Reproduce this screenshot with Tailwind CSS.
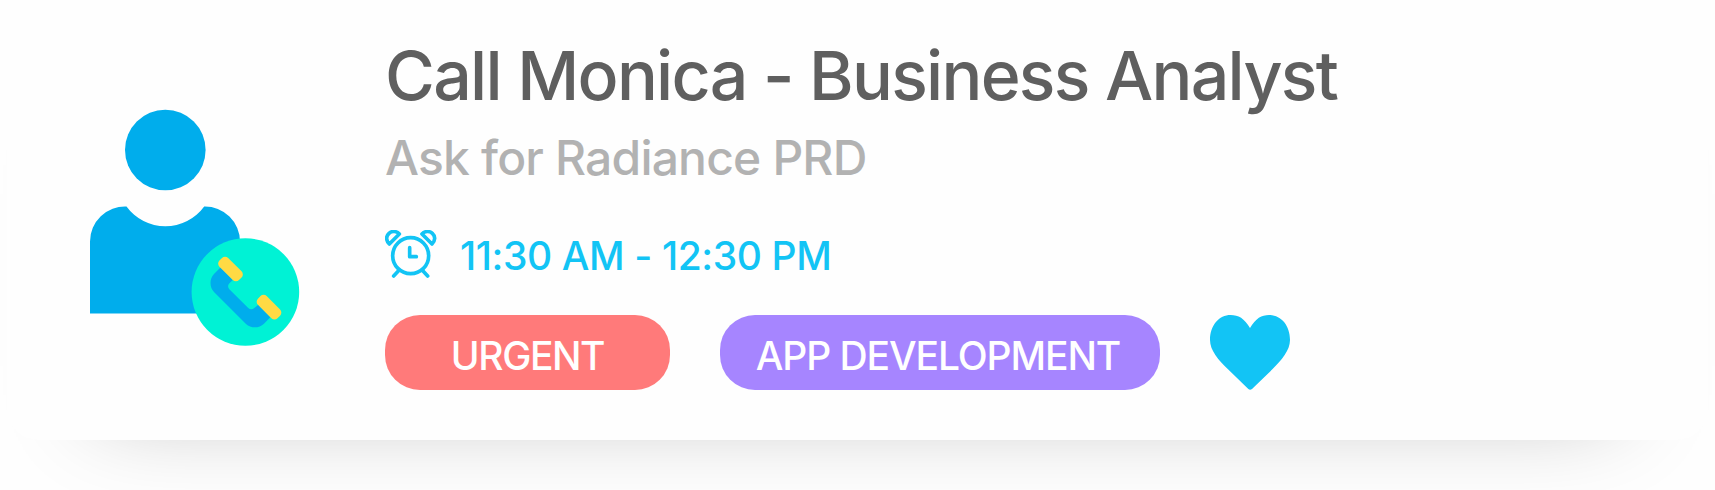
<!DOCTYPE html>
<html lang="en">
<head>
<meta charset="utf-8">
<title>Task card</title>
<script src="https://cdn.jsdelivr.net/npm/@tailwindcss/browser@4"></script>
</head>
<body class="h-[490px] overflow-hidden bg-[#fefefe] px-[7px] font-['Inter',sans-serif]">
<article class="flex h-[440px] rounded-b-[32px] bg-[#fefefe] pl-[83px] shadow-[0_60px_94px_-90px_rgba(0,0,0,0.29)]">
  <svg class="mt-[109px] h-[238px] w-[210px] shrink-0" viewBox="90 109 210 238">
    <circle cx="165.3" cy="150" r="40.3" fill="#00adec"/>
    <path fill="#00adec" d="M90 313.5V241.500A35 35 0 0 1 126.500 206.500A48 48 0 0 0 204.200 206.500A35 35 0 0 1 240 241.500V313.500Z"/>
    <circle cx="245.400" cy="292" r="53.800" fill="#00f2d5"/>
    <g transform="translate(70 90) scale(.33333)">
      <path fill="#00adec" d="M452 532L432 552C418 566 418 592 432 606L528 702C543 716 568 715 582 701L601 682L565 644L553 654Q543 662 534 653L478 598Q471 589 477 581L488 570Z"/>
      <rect x="-41.500" y="-18.500" width="83" height="37" rx="13" transform="translate(481.500 537) rotate(45)" fill="#ffda44"/>
      <rect x="-41.500" y="-18.500" width="83" height="37" rx="13" transform="translate(597 651.500) rotate(45)" fill="#ffda44"/>
    </g>
  </svg>
  <div class="ml-[85px] pt-[35px]">
    <h1 class="h-20 text-[68px] leading-[80px] font-medium tracking-[-1.73px] whitespace-nowrap text-[#5f5f5f] [font-feature-settings:'calt'_0]"><span>Call Monica - Business Analyst</span></h1>
    <p class="mt-3 h-[61px] text-[48px] leading-[61px] font-medium tracking-[-0.82px] whitespace-nowrap text-[#b2b2b2]"><span>Ask for Radiance PRD</span></p>
    <div class="mt-[35px] flex h-[66px] items-center text-[39px] leading-[66px] font-[450] text-[#12c4f5]">
      <svg class="-mt-[5px] h-12 w-[52px] shrink-0" viewBox="45 44 156 144" fill="none" stroke="currentColor" stroke-width="11" stroke-linecap="round" stroke-linejoin="round">
        <circle cx="122" cy="121" r="54"/>
        <path d="M119 97V124H139M87 165L71 182M157 165L173 182M58 86C48 76 47 63 57 54C66 46 80 47 88 56ZM186 86C196 76 197 63 187 54C178 46 164 47 156 56Z"/>
      </svg>
      <span class="ml-[23px] tracking-[-0.4px] whitespace-nowrap">11:30 AM<span class="[font-feature-settings:'calt'_0]"> - </span>12:30 PM</span>
    </div>
    <div class="mt-[26px] flex h-[75px] gap-[50px] text-[39px] leading-[75px] font-[450] tracking-[-1.1px] whitespace-nowrap text-white">
      <span class="w-[285px] rounded-[35px] bg-[#ff7a7a] pt-[3px] text-center tracking-[-1.4px]">URGENT</span>
      <span class="w-[440px] rounded-[35px] bg-[#a685ff] pt-[3px] pr-1 text-center">APP DEVELOPMENT</span>
      <svg class="h-[75px] w-20 shrink-0" viewBox="1110 45 240 225"><path fill="#12c4f5" d="M1230 84C1213 55 1195 45 1172 45C1137 45 1110 76 1110 120C1110 151 1135 180 1164 208L1225 267Q1230 272 1236 267L1297 208C1325 180 1350 151 1350 120C1350 76 1323 45 1287 45C1265 45 1247 55 1230 84Z"/></svg>
    </div>
  </div>
</article>
</body>
</html>
